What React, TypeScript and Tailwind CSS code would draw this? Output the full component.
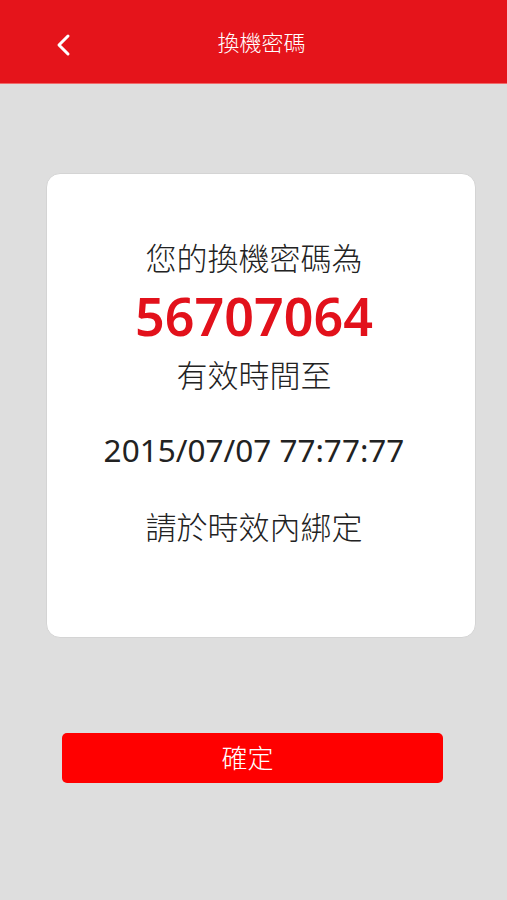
import React from "react";

export default function App() {
  const font = { fontFamily: '"Noto Sans", "Noto Sans CJK TC", sans-serif' };
  return (
    <div className="w-[507px] h-[900px] bg-[#dedede] flex flex-col" style={font}>
      <div className="h-[84px] bg-[#e5141b] flex items-center relative shrink-0 border-b border-[#f06a6a]">
        <div className="absolute left-[54px] top-[33px]">
          <svg width="20" height="24" viewBox="0 0 20 24" fill="none">
            <path d="M14 3 L5 12 L14 21" stroke="white" strokeWidth="3" strokeLinecap="round" strokeLinejoin="round" />
          </svg>
        </div>
        <div className="w-full text-center text-white text-[22px] leading-[28px] pt-[1px] pl-[16px] font-light">換機密碼</div>
      </div>
      <div className="ml-[46px] w-[430px] mt-[89px] h-[465px] bg-white rounded-[14px] border border-[#d4d4d4] flex flex-col items-center pt-[64px] pr-[14px] text-[#222]">
        <div className="text-[31px] leading-[40px] font-light">您的換機密碼為</div>
        <div className="text-[52px] leading-[60px] font-semibold text-[#e2111b] mt-[8px]">56707064</div>
        <div className="text-[31px] leading-[40px] mt-[9px] font-light">有效時間至</div>
        <div className="text-[31.5px] leading-[44px] mt-[33px]">2015/07/07 77:77:77</div>
        <div className="text-[31px] leading-[40px] mt-[35px] font-light">請於時效內綁定</div>
      </div>
      <div className="ml-[62px] w-[381px] mt-[95px] h-[50px] bg-[#ff0000] rounded-[5px] flex items-center justify-center text-white text-[26px] pr-[10px] font-light">
        確定
      </div>
    </div>
  );
}
